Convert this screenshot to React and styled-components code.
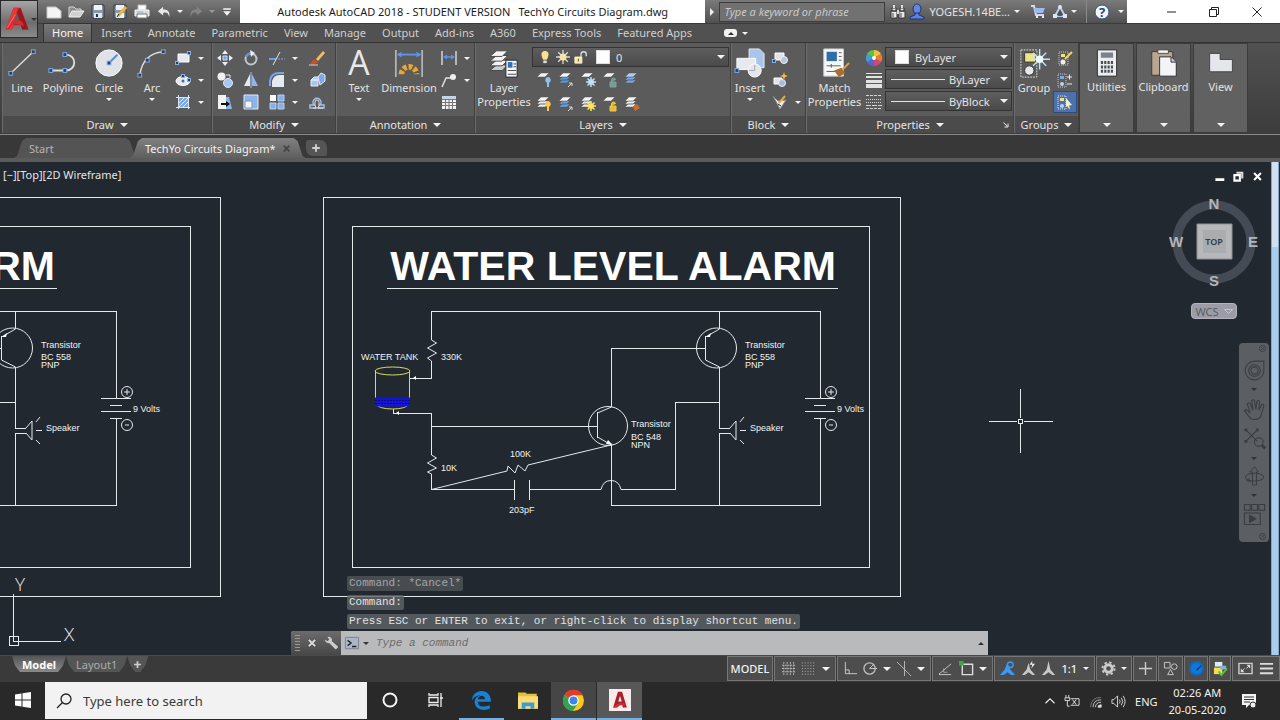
import React from 'react';
import styled, { createGlobalStyle } from 'styled-components';

const INK = '#23344d';

const glyphs = {
    logo: [32, <>
        <path d="M3 28 12 3h8l9 25h-7l-1.500-5H12l-1.500 5z" fill="#c3202b" />
        <path d="M3 28 12 3h5L10.500 28z" fill="#e03a3f" />
        <path d="M20 3l9 25h-7L16 8z" fill="#9c1620" />
        <path d="M16 9l-3.500 9.500h6.800z" fill="#5d5d5d" />
        <path d="M8 20c4-4 9-3 14-1l2 5c-5-2-9-3-13-2l-5 6H3z" fill="#d42c33" />
        <path d="M5 26l9-15" stroke="#f4797a" />
    </>],
    fresh: [16, <path d="M1 3h9l5 4v7H1z" fill="#f4f4f4" stroke="#c4c4c4" />],
    folder: [16, <>
        <path d="M1 13V3h5l2 2h5v2" fill="#8c8c8c" stroke="#d5d5d5" />
        <path d="M1 13 4 7h12l-4 6z" fill="#d0d0d0" stroke="#f0f0f0" />
    </>],
    save: [16, <>
        <path d="M2 1h12v13H2z" fill="#8b97a5" stroke="#303a47" />
        <path d="M4 1h8v5H4z" fill="#eef2f6" /><path d="M4 9h8v5H4z" fill="#dfe5ea" /><path d="M6 10h2v3H6z" fill={INK} />
    </>],
    saveAs: [16, <>
        <path d="M2 1h12v13H2z" fill="#8b97a5" stroke="#303a47" />
        <path d="M4 1h8v5H4zM4 9h8v5H4z" fill="#eef2f6" />
        <path d="M6 12 14 3" stroke="#e9b83d" strokeWidth="3" /><path d="M5 13l2-3" stroke="#222" />
    </>],
    print: [16, <>
        <path d="M4 1h8v5H4z" fill="#fff" stroke="#bbb" /><path d="M1 6h14v6H1z" fill="#dcdcdc" stroke="#f5f5f5" />
        <path d="M3 10h10v4H3z" fill="#fff" stroke="#777" /><path d="M3 8h6" stroke="#8bb0d8" />
    </>],
    undo: [16, <path d="M7 2 1 7l6 5V9c4-1 6 0 7 5 1-6-1-9-7-9z" fill="#e8e8e8" />],
    redo: [16, <path d="M9 2l6 5-6 5V9c-4-1-6 0-7 5C1 8 3 5 9 5z" fill="#858585" />],
    customize: [16, <path d="M3 3h10v2H3zM3 7h10l-5 6z" fill="#f5f5f5" />],
    binoculars: [16, <>
        <path d="M2 4h4v3H2zM10 4h4v3h-4zM1 7h6v7H1zM9 7h6v7H9z" fill="#e9e9e9" stroke="#333" />
        <path d="M7 6h2v4H7zM3 1h2v3H3zM11 1h2v3h-2z" fill="#ddd" /><path d="M3 9v4M11 9v4" stroke="#444" />
    </>],
    user: [16, <>
        <ellipse cx="8" cy="5" rx="4" ry="5" fill="#6287e0" stroke="#1b3372" />
        <path d="M6 9v2l-5 2v2h14v-2l-5-2V9z" fill="#5d83de" stroke="#1b3372" />
    </>],
    cart: [16, <>
        <path d="M1 2h3l2 9h8" fill="none" stroke="#cfdcf6" strokeWidth="2" />
        <path d="M4 4h11l-2 5H5z" fill="#9fb9e8" /><path d="M6 13h2M12 13h2" stroke="#dfe8fa" strokeWidth="2" />
    </>],
    a360: [16, <>
        <path d="M8 3 3 12h10z" fill="#4e4e4e" stroke="#b9cbee" strokeWidth="2" />
        <circle cx="8" cy="3" r="2" fill="#d9e4fa" /><path d="M1 10h4v4H1zM11 10h4v4h-4z" fill="#dce6f9" />
        <path d="M5 12q3-3 6 0" fill="#3c5892" />
    </>],
    help: [16, <>
        <circle cx="8" cy="8" r="7" fill="#f2f5fa" stroke="#34507c" />
        <text x="8" y="13" textAnchor="middle" fontSize="13" fontWeight="700" fill="#24477f">?</text>
    </>],
    minimize: [16, <path d="M4 8h9" stroke="#222" />],
    restore: [16, <><path d="M3.500 5.500h7v7h-7zM5.500 5V3.500h7v7H11" fill="none" stroke="#222" /></>],
    close: [16, <path d="m3.500 3.500 9 9m0-9-9 9" stroke="#222" />],

    line: [32, <><path d="M4 27 28 4" stroke="#dcdcdc" strokeWidth="1.500" /><Nodes at={[[4, 27], [28, 4]]} /></>],
    polyline: [32, <><path d="M3 24h16c12 0 12-17 0-17" fill="none" stroke="#dcdcdc" strokeWidth="2" /><Nodes at={[[3, 24], [18, 24], [18, 7]]} /></>],
    circle: [32, <><circle cx="16" cy="16" r="14" fill="#dfe3e8" stroke="#fff" /><path d="M16 16 25 7" stroke="#4f88d8" strokeWidth="2" /><Nodes at={[[16, 16]]} /></>],
    arc: [32, <><path d="M3 29Q6 6 28 4" fill="none" stroke="#dcdcdc" strokeWidth="1.500" /><Nodes at={[[3, 29], [11, 13], [28, 4]]} /></>],
    rect: [16, <><path d="M3 4h11v8H3z" fill="#e5e8ee" stroke="#fff" /><Nodes small at={[[2, 13], [14, 3]]} /></>],
    ellipse: [16, <><ellipse cx="8" cy="9" rx="7" ry="4.500" fill="#e5e8ee" stroke="#fff" /><circle cx="8" cy="9" r="1.500" fill="#3d6bb0" /><Nodes small at={[[8, 4], [14, 8]]} /></>],
    hatch: [16, <>
        <path d="M3.500 1v14M13.500 1v14M1 3.500h14M1 13.500h14" stroke="#dbe5f2" />
        <path d="M4 4h9v9H4z" fill="#7fa8e2" /><path d="m4 9 5-5M4 13l9-9M8 13l5-5" stroke="#dfe9f8" />
    </>],
    move: [16, <>
        <path d="M8 0l3 4H5zM8 16l3-4H5zM0 8l4-3v6zM16 8l-4-3v6z" fill="#eaf0f8" />
        <path d="M6 6h4v4H6z" fill="#6d9fe4" stroke="#cfe0f6" />
    </>],
    rotate: [16, <>
        <circle cx="8" cy="9" r="5.500" fill="none" stroke="#c2c7cd" strokeWidth="2" /><path d="M3 7a5.500 5.500 0 0 1 8-3" fill="none" stroke="#5b95ea" strokeWidth="2" /><path d="m7 0 5 3-4 4z" fill="#e8eef7" />
    </>],
    trim: [16, <><path d="M0 9h7" stroke="#69a0ec" strokeWidth="2" /><path d="M9 9h7" stroke="#79a9ed" strokeDasharray="2 1" /><path d="M11 2 4 15" stroke="#e5e5e5" /></>],
    erase: [16, <>
        <path d="M7 9 14 1l2 2-7 8z" fill="#f3c15a" /><path d="m5 9 4 3-4 3-4-1z" fill="#d94b24" /><path d="M0 15h9" stroke="#cfd3d8" />
    </>],
    copy: [16, <>
        <circle cx="4.500" cy="4.500" r="4" fill="#f0f0f0" /><circle cx="11" cy="11" r="4.500" fill="#a9c6f0" stroke="#dbe7f9" />
        <path d="M9 3h4v3" fill="none" stroke="#e6e6e6" />
    </>],
    mirror: [16, <><path d="M7 2v12H1z" fill="#e8e8e8" /><path d="M9 2v12h6z" fill="#8fb5ea" /><path d="M8 0v16" stroke="#a7c3ec" /></>],
    fillet: [16, <><path d="M3 15V9q2-6 7-6h5v12z" fill="#e6e9ed" /><path d="M1 14V9q1-8 9-8h5" fill="none" stroke="#77a6ea" strokeWidth="2" /></>],
    explode: [16, <>
        <path d="m2 8 3-3h6l-2 3zM2 8h7v6H2z" fill="#a8c7ef" stroke="#e5eefb" /><path d="m9 5 3-4 4 2v6l-5 4z" fill="#7fa9e4" stroke="#e5eefb" />
    </>],
    stretch: [16, <><path d="M1 1h8v14H1z" fill="#f2f2f2" /><path d="M9 3h3l3 12H9z" fill="#8fb5e8" /><path d="M4 10h6" stroke="#111" strokeWidth="2" /><path d="m9 7 4 3-4 3z" fill="#111" /></>],
    scale: [16, <><path d="M1 1h14v14H1z" fill="#8fb5e8" stroke="#e2ebf8" /><path d="M2 7h7v7H2z" fill="#f4f4f4" stroke="#7a94bb" /></>],
    array: [16, <><path d="M1 1h6v6H1z" fill="#fafafa" /><path d="M9 1h6v6H9zM1 9h6v6H1zM9 9h6v6H9z" fill="#86b0ea" stroke="#b7d0f4" /></>],
    offset: [16, <>
        <path d="M1 14v-3h4a4 4 0 1 1 6 0h4v3z" fill="none" stroke="#a3c1ec" strokeWidth="1.500" /><path d="M4 14h3a2 2 0 0 0-1-2V8a2 2 0 0 1 4 0v4l-1 2h5" fill="none" stroke="#e5e5e5" />
    </>],
    text: [32, <text x="16" y="29" textAnchor="middle" fontSize="36" fontWeight="400" fill="#e8e8e8" fontFamily="Open Sans">A</text>],
    dimension: [32, <>
        <path d="M2 2v29M30 2v29" stroke="#c8c8c8" strokeWidth="1.500" /><path d="M4 7h24" stroke="#5d94ea" strokeWidth="2" /><path d="m3 7 5-3v6zM29 7l-5-3v6z" fill="#5d94ea" />
        <path d="M8 28a8 8 0 0 1 16 0" fill="none" stroke="#eda62c" strokeWidth="6" strokeDasharray="4 2" />
    </>],
    linear: [16, <><path d="M1 1v14M15 1v14" stroke="#d5d5d5" strokeWidth="1.500" /><path d="M3 7h10" stroke="#5d94ea" strokeWidth="1.500" /><path d="m2 7 4-2.500v5zM14 7l-4-2.500v5z" fill="#5d94ea" /></>],
    leader: [16, <><path d="M1 15 5 6h5" fill="none" stroke="#e0e0e0" strokeWidth="1.500" /><circle cx="12" cy="5" r="3" fill="#eee" /></>],
    table: [16, <><path d="M1 2h14v13H1z" fill="#f1f1f1" /><path d="M1 2h14v3H1z" fill="#c3d3e9" /><path d="M1 5.500h14M1 8.500h14M1 11.500h14M4.500 5v10M8 5v10M11.500 5v10" stroke="#777" /></>],
    layerProps: [32, <>
        <Sheets /><path d="M18 13h12v18H18z" fill="#f5f7fa" stroke="#222" /><path d="M20 15h5v6h-5z" fill="#3271b8" /><path d="M26 17h3M26 20h3M20 24h9M20 28h9" stroke="#444" />
    </>],
    bulb: [16, <><path d="M4 5a4 4 0 0 1 8 0q0 3-2 6H6Q4 8 4 5z" fill="#f9e28b" /><path d="M6 12h4v3H6z" fill="#ddd" /></>],
    sun: [16, <><path d="M8 0v16M0 8h16M2.500 2.500l11 11m0-11-11 11" stroke="#d9d9d9" strokeWidth="1.500" /><circle cx="8" cy="8" r="4" fill="#f7e6a0" /></>],
    unlock: [16, <><path d="M1 8h8v7H1z" fill="#f6e6a2" stroke="#fff8d4" /><path d="M8 8V5a3 3 0 0 1 6 0v2" fill="none" stroke="#ddd" strokeWidth="1.500" /><path d="M5 10v3" stroke="#444" /></>],
    insert: [32, <>
        <path d="M15 1h11l5 5v15H15z" fill="#a9c6ea" stroke="#e5eefa" /><path d="M2 11h20v12H2z" fill="#e7e9ee" stroke="#fff" /><circle cx="21" cy="24" r="7" fill="#e3e6ea" stroke="#fff" /><path d="M21 24v-6M21 24h-6" stroke="#a0a7b3" /><Nodes at={[[2, 24]]} />
    </>],
    block: [16, <><path d="M3 3h9v7H3z" fill="#dfe3ea" stroke="#fff" /><circle cx="12" cy="10" r="3.500" fill="#b9c5d8" stroke="#eef2f8" /><Nodes small at={[[2, 11]]} /></>],
    blockNew: [16, <><path d="M2 6h8v6H2z" fill="#dfe3ea" stroke="#fff" /><circle cx="10" cy="11" r="3.500" fill="#a8bddb" stroke="#e8eef8" /><path d="m12 0 1 3 3 1-3 1-1 3-1-3-3-1 3-1z" fill="#ffb93b" /></>],
    attr: [16, <><path d="M1 2l5 5 8-1-6 9z" fill="#f1f1f1" stroke="#888" /><path d="M7 9 13 2" stroke="#e8a93a" strokeWidth="2" /><path d="m6 10 3 2" stroke="#222" /></>],
    match: [32, <>
        <path d="M4 1h21v29H4z" fill="#f7f8fa" stroke="#ccc" /><path d="M7 4h11v10H7z" fill="#2f6fa8" /><path d="M20 5h3M20 9h3M20 13h3M7 19h15M7 25h10M12 17v4" stroke="#555" />
        <path d="m15 24 8-3 4 6-7 4z" fill="#a8702b" /><path d="m24 23 7-7" stroke="#d3a259" strokeWidth="2" />
    </>],
    wheel: [16, <>
        <path d="M8 8V0a8 8 0 0 1 7 4z" fill="#f3c23a" /><path d="M8 8l7-4a8 8 0 0 1 0 8z" fill="#ee7a36" /><path d="M8 8l7 4a8 8 0 0 1-7 4z" fill="#c94a7c" />
        <path d="M8 8v8a8 8 0 0 1-7-4z" fill="#5b63d3" /><path d="M8 8l-7 4a8 8 0 0 1 0-8z" fill="#3f9fd6" /><path d="M8 8 1 4a8 8 0 0 1 7-4z" fill="#5bbf57" /><circle cx="8" cy="8" r="2" fill="#fff" />
    </>],
    weights: [16, <path d="M0 1h16v1H0zM0 4h16v2H0zM0 8h16v3H0zM0 12h16v4H0z" fill="#e2e2e2" />],
    types: [16, <><path d="M0 1.500h16M0 14.500h16" stroke="#d5d5d5" strokeDasharray="3 1" /><path d="M0 5.500h16M0 8.500h16" stroke="#d5d5d5" strokeDasharray="1 1" /><path d="M0 11.500h16" stroke="#d5d5d5" strokeDasharray="5 1" /></>],
    group: [32, <>
        <path d="M2 2h17v29H2z" fill="none" stroke="#ddd" strokeDasharray="2 1" /><path d="M6 5h12v10H6z" fill="#f0e583" stroke="#333" /><circle cx="11" cy="24" r="5" fill="#e8e8e8" stroke="#333" />
        <path d="M22 1v22M11 12h22M15 5l14 14m0-14L15 19" stroke="#bde3fb" strokeWidth="1.500" /><circle cx="22" cy="12" r="4" fill="#eefaff" />
    </>],
    ungroup: [16, <><path d="M2 2h9v13H2z" fill="none" stroke="#ccc" strokeDasharray="1 1" /><path d="M4 4h4v3H4z" fill="#f0e583" /><circle cx="6" cy="12" r="2.500" fill="#eee" /><path d="m8 9 7-7" stroke="#f0d76c" strokeWidth="2" /></>],
    groupEdit: [16, <><path d="M1 2h8v13H1z" fill="none" stroke="#ccc" strokeDasharray="1 1" /><path d="M3 4h4v3H3z" fill="#7ea9e3" /><circle cx="5" cy="12" r="2" fill="#bcd3f0" /><path d="M10 5h5M12.500 2.500v5M10 12h5" stroke="#eee" /></>],
    groupPick: [16, <><path d="M1 2h8v13H1z" fill="none" stroke="#e8e8e8" strokeDasharray="1 1" /><path d="M3 4h4v3H3z" fill="#f0e583" /><circle cx="5" cy="12" r="2" fill="#bcd3f0" /><path d="m9 4 6 7-3 .5 1 3-1 .5-1.500-3L9 13z" fill="#f8f3c2" /></>],
    calc: [32, <>
        <path d="M5 1h22v30H5z" fill="#eceef0" stroke="#222" /><path d="M9 4h14v6H9z" fill="#7b828b" /><path d="M9 15.500h14M9 20.500h14M9 25.500h14" stroke="#4a4f57" strokeWidth="3.500" strokeDasharray="2.500 1.300" />
    </>],
    clipboard: [32, <>
        <path d="M2 3h24v27H2z" fill="#b9a692" stroke="#3c3128" /><path d="M9 1h12v4H9z" fill="#f5f5f5" stroke="#444" /><path d="M11 9h13l6 6v16H11z" fill="#f4f4f8" stroke="#222" /><path d="M24 9v6h6" fill="#ccd" stroke="#222" />
    </>],
    view: [32, <path d="M3 5h12v7h14v14H3z" fill="#e4e6ec" stroke="#3c3c3c" />],

    windows: [16, <path d="M0 2.500 6.500 1.500v6H0zM7.500 1.300 16 0v7.500H7.500zM0 8.500h6.500v6L0 13.500zM7.500 8.500H16V16l-8.500-1.300z" fill="#fff" />],
    search: [16, <><circle cx="10" cy="6" r="5" fill="none" stroke="#222" strokeWidth="1.300" /><path d="M6.500 9.500 1 15" stroke="#222" strokeWidth="1.300" /></>],
    cortana: [16, <circle cx="8" cy="8" r="6.500" fill="none" stroke="#f5f5f5" strokeWidth="2" />],
    taskView: [16, <path d="M1 1v2h9V1M1 5.500h9v5H1zM1 15v-2h9v2M13 1v14M12 6h3" fill="none" stroke="#eee" strokeWidth="1.300" />],
    edge: [16, <path d="M0 8C0 3 4 0 8 0c5 0 8 4 8 9H5c0 3 2 4 5 4 2 0 3.500-.5 5-1v3c-5 2-11 1-12.500-4C1.500 7 4 4.500 7 3.500 4 3.500 1 5.500 0 8zm5-1h6c0-4-5.500-4-6 0z" fill="#1583d8" />],
    explorer: [16, <><path d="M0 2h6l1 1h8v12H0z" fill="#eebd38" /><path d="M0 5h16v10H0z" fill="#fbdd78" /><path d="M3 15v-5h10v5h-3v-2H6v2z" fill="#3c9bd9" /></>],
    chrome: [16, <>
        <circle cx="8" cy="8" r="8" fill="#fbc916" /><path d="M8 8 1 4a8 8 0 0 1 14 0H8z" fill="#e33b2e" /><path d="M8 8 1 4a8 8 0 0 0 6.500 12L11.500 10z" fill="#31a350" /><circle cx="8" cy="8" r="4" fill="#fff" /><circle cx="8" cy="8" r="3" fill="#3f83ee" />
    </>],
    acad: [32, <><path d="M0 0h32v32H0z" fill="#fbeceb" /><path d="M6 27 13 4h6l7 23h-6l-1-5h-7l-1 5z" fill="#a8202a" /><path d="m16 10-2.500 8h5z" fill="#fbeceb" /><path d="M6 27q7-9 18-6l1 3q-9-2-13 3z" fill="#cd2f36" /></>],
    up: [16, <path d="m2 11 6-6 6 6" fill="none" stroke="#eee" strokeWidth="1.500" />],
    battery: [16, <><path d="M1 1v3M4 1v3M0 4h5v3H0zM2.500 7v6H5M6 5h9v7H6" fill="none" stroke="#ddd" /><path d="m8 6 4 5m0-5-4 5" stroke="#eee" /></>],
    wifi: [16, <g fill="none" stroke="#ddd"><path d="M2 15Q2 3 15 3" stroke="#888" /><path d="M5 15q0-9 10-9M8 15q0-6 7-6" /><path d="M11 15q0-3 4-3v3z" fill="#ddd" /></g>],
    volume: [16, <path d="M1 6h2l4-4v12l-4-4H1zM9 6q1.500 2 0 4M11 4q3 4 0 8M13 2q4 6 0 12" fill="none" stroke="#ddd" />],
    note: [16, <><path d="M1 1h14v11h-7l-3 3v-3H1z" fill="#f3f3f3" /><path d="M3 4h10M3 6.500h10M3 9h6" stroke="#333" /><circle cx="12" cy="12" r="3" fill="#eee" stroke="#333" /></>],

    gridOn: [16, <path d="M3 1v14M6.500 1v14M10 1v14M13.500 1v14M1 4.500h14M1 8h14M1 11.500h14" stroke="#bbb" strokeDasharray="2 1" />],
    snap: [16, <path d="M1 2h14M1 5h14M1 8h14M1 11h14M1 14h14" stroke="#bbb" strokeDasharray="1 2" />],
    ortho: [16, <path d="M2.500 1v12.500H15M2.500 9.500h4v4" fill="none" stroke="#ccc" />],
    polar: [16, <><circle cx="7" cy="8" r="6" fill="none" stroke="#bbb" strokeWidth="1.500" /><path d="M7 8h8M7 8l4-4" stroke="#ccc" /></>],
    iso: [16, <path d="m0 1 15 15M8 0v16" stroke="#bbb" />],
    otrack: [16, <><path d="M1 14 14 3M1 14.500h13" stroke="#ccc" /><path d="M6 8v4h4" fill="none" stroke="#aaa" /></>],
    osnap: [16, <><path d="M3.500 3.500h11v11h-11z" fill="none" stroke="#ddd" strokeWidth="1.500" /><path d="M0 0h5v5H0z" fill="#2eb134" /></>],
    scaleOn: [16, <><path d="M8 1 5 9l-5 6h4l4-3 4 3h4l-5-6z" fill="#3a9af5" /><circle cx="11" cy="4" r="3" fill="#505050" stroke="#3a9af5" strokeWidth="1.500" /></>],
    scaleAuto: [16, <><path d="M8 2 6 9l-5 6h3l4-3 4 3h3l-5-6z" fill="#c8c8c8" /><path d="m12 0-3 4h3l-1 4 4-5h-3z" fill="#eee" /></>],
    scaleList: [16, <path d="M8 0 6 9l-5 6h3l4-3 4 3h3l-5-6z" fill="#c8c8c8" />],
    gear: [16, <><circle cx="8" cy="8" r="4" fill="none" stroke="#ccc" strokeWidth="3" /><circle cx="8" cy="8" r="6.500" fill="none" stroke="#ccc" strokeWidth="2" strokeDasharray="2.500 2.600" /></>],
    plus: [16, <path d="M8 1v14M1 8h14" stroke="#ccc" strokeWidth="1.500" />],
    shapes: [16, <><path d="M1.500 1.500h6v6h-6zM8 9l3 5.500H5z" fill="none" stroke="#ccc" /><circle cx="12" cy="6" r="3" fill="none" stroke="#ccc" /></>],
    perf: [16, <><circle cx="8" cy="8" r="8" fill="#0f67c0" /><circle cx="8" cy="8" r="6" fill="#1377d8" /><path d="M8 10l5-5" stroke="#083c74" strokeWidth="1.500" /></>],
    standards: [16, <><path d="M2 1h8v5H2z" fill="#dce9f6" /><path d="M1 7h9v7H1z" fill="#f5df4a" /><path d="M8 5h6v4H8z" fill="#7fb2ea" /><path d="m6 11 3 4 6-7" fill="none" stroke="#5fbf3a" strokeWidth="2" /></>],
    full: [16, <><path d="M1 2.500h14v11H1z" fill="none" stroke="#ccc" strokeWidth="1.500" /><path d="M9 4h4v4zM7 12H3V8z" fill="#ddd" /><path d="m9 8 3-3M7 8l-3 3" stroke="#ddd" /></>],
    menu: [16, <path d="M1 3h14M1 8h14M1 13h14" stroke="#ddd" strokeWidth="2" />],
    wrench: [16, <path d="M1 4a4 4 0 0 0 5 4l6 6q1 2 3 0t0-3L9 6a4 4 0 0 0-5-5l2 3-2 2z" fill="#ccc" />],
    prompt: [16, <><path d="M.5 1.500h15v13H.5z" fill="#aab6c6" stroke="#747d8a" /><path d="m3 5 4 3-4 3" fill="none" stroke="#222" strokeWidth="1.500" /><path d="M8 12h5" stroke="#222" strokeWidth="1.500" /></>],
    cross: [16, <path d="m3 3 10 10M13 3 3 13" stroke="currentColor" strokeWidth="3" />],
    plusBold: [16, <path d="M8 2v12M2 8h12" stroke="#d0d0d0" strokeWidth="3" />],
    docMin: [16, <path d="M2 12.500h13" stroke="#fff" strokeWidth="4" />],
    docRestore: [16, <><path d="M5 1h10v10h-3V4H5z" fill="#ddd" /><path d="M2 6h8v8H2z" fill="none" stroke="#fff" strokeWidth="3" /></>],
    launcher: [16, <path d="M3 3l7 7M12 5v7H5" fill="none" stroke="#eee" strokeWidth="2" />],
    wheelNav: [32, <g fill="none" stroke="#3a3e43" strokeWidth="1.500"><path d="M16 3h13v13a13 13 0 1 1-13-13z" /><circle cx="16" cy="16" r="8" /><circle cx="16" cy="16" r="5" /></g>],
    hand: [32, <path d="M11 29 2 18q2-3 5 0l3 3L6 8q2-3 4 0l4 9-2-13q2-3 4 0l2 12 1-11q3-3 4 0l-1 12 4-8q3-1 3 2l-5 16q-2 3-9 3z" fill="none" stroke="#393d42" strokeWidth="1.500" />],
    zoomNav: [32, <g fill="none" stroke="#393d42" strokeWidth="1.500"><path d="M4 4l16 16M20 4 4 20" /><path d="M2 2h4v4H2zM18 2h4v4h-4zM2 18h4v4H2z" fill="#393d42" stroke="none" /><circle cx="22" cy="21" r="6" /><path d="m26 25 5 5" strokeWidth="4" /></g>],
    orbit: [32, <g fill="none" stroke="#393d42" strokeWidth="1.500"><path d="M13 29V9H9l7-8 6 8h-3v20z" /><ellipse cx="16" cy="17" rx="14" ry="6" /><path d="m10 24-6-2 5-3" /></g>],
    motion: [32, <g fill="none" stroke="#393d42" strokeWidth="1.500"><path d="M2 2h8v8H2zM12 2h8v8h-8zM22 2h8v8h-8zM2 14h22v16H2z" /><path d="m9 17 9 5-9 5z" fill="#393d42" /></g>],
    dismiss: [16, <><circle cx="8" cy="8" r="7" fill="none" stroke="#393d42" strokeWidth="2" /><path d="m5 5 6 6m0-6-6 6" stroke="#393d42" strokeWidth="2" /></>],
};

const layerTints = [
    ['#8ec2ee', '#5b97da', '#bfe1fa', '#7aa39c', '#78a8e4'],
    ['#ffc94d', '#6b9fe4', '#ffe564', '#f4c83a', '#c76e2c'],
];

const ribbonTabs = ['Home', 'Insert', 'Annotate', 'Parametric', 'View', 'Manage', 'Output', 'Add-ins', 'A360', 'Express Tools', 'Featured Apps'];

const circuitLabels = [
    [361, 360, 'WATER TANK'],
    [441, 360, '330K'],
    [441, 471, '10K'],
    [510, 457, '100K'],
    [509, 513, '203pF'],
    [631, 427, 'Transistor'],
    [631, 440, 'BC 548'],
    [631, 448, 'NPN'],
    [745, 348, 'Transistor'],
    [745, 360, 'BC 558'],
    [745, 368, 'PNP'],
    [750, 431, 'Speaker'],
    [837, 412, '9 Volts'],
];

function Icon({ name, size = 16 }) {
    const [box, art] = glyphs[name];
    return <svg width={size} height={size} viewBox={`0 0 ${box} ${box}`} aria-hidden="true" overflow="visible">{art}</svg>;
}

function Nodes({ at, small }) {
    const r = small ? 1.5 : 2;
    return at.map(([x, y]) => (
        <rect key={`${x}-${y}`} x={x - r} y={y - r} width={r * 2} height={r * 2} fill="#30405c" stroke="#7fb0f2" />
    ));
}

function Sheets() {
    return [20, 15, 10, 5].map((y) => (
        <path key={y} d={`M1 ${y + 4}l7-6h12l-6 6z`} fill={y === 20 ? '#c9ccd1' : '#f4f4f4'} stroke="#444" />
    ));
}

function LayerTool({ row, col }) {
    const tint = layerTints[row][col];
    const stack = row === 1 && col !== 3 || col === 1 || col === 4;
    return (
        <svg width="16" height="16" viewBox="0 0 16 16" aria-hidden="true">
            {stack && <path d="M1 11l3-3h8l-3 3zM1 8l3-3h8L9 8z" fill={col === 1 || (row === 0 && col === 4) ? tint : '#eee'} stroke="#555" strokeWidth=".5" />}
            <path d="M1 5l4-4h8L9 5z" fill={row === 0 && col === 4 ? '#a9cdf3' : '#f4f4f4'} stroke="#555" strokeWidth=".5" />
            {col === 0 && <path d="M12 5a3 3 0 0 1 2 5l-1 1v4h-2v-4l-1-1a3 3 0 0 1 2-5z" fill={tint} />}
            {col === 1 && <path d="m10 15 4-4m0 3v-3h-3" stroke="#ddd" fill="none" />}
            {col === 2 && <g stroke={tint} strokeWidth="1.500"><path d="M11 5v10M6 10h10M7.500 6.500l7 7m0-7-7 7" /><circle cx="11" cy="10" r="2" fill={tint} /></g>}
            {col === 3 && <path d="M8 10h6v5H8zM9.500 10V8a2 2 0 0 1 4 0" fill={tint} stroke={tint} fillOpacity=".9" />}
            {col === 4 && row === 1 && <path d="m9 11 4-3 3 4-5 3z" fill={tint} />}
        </svg>
    );
}

function BigTool({ icon, label, caret, width, size = 30 }) {
    return (
        <Big $width={width}>
            <Icon name={icon} size={size} />
            <span>{label}</span>
            {caret && <Caret $small />}
        </Big>
    );
}

function SmallTools({ rows, gap }) {
    return (
        <SmallGrid>
            {rows.map((row, i) => (
                <SmallRow key={i} $gap={gap}>
                    {row.map(([icon, caret, active]) => (
                        <Split key={icon}>
                            <IconButton aria-label={icon} $active={active}><Icon name={icon} /></IconButton>
                            {caret ? <CaretButton aria-label={`${icon} options`}><Caret $small /></CaretButton> : null}
                        </Split>
                    ))}
                </SmallRow>
            ))}
        </SmallGrid>
    );
}

function Panel({ title, width, launcher, children }) {
    return (
        <PanelBox $width={width}>
            <PanelBody>{children}</PanelBody>
            <PanelTitle>
                {title}<Caret />
                {launcher && <Launcher aria-label="Properties palette"><Icon name="launcher" size={8} /></Launcher>}
            </PanelTitle>
        </PanelBox>
    );
}

function Combo({ label, value, line, swatch, children }) {
    return (
        <ComboBox>
            {children}
            {swatch && <Swatch />}
            {line && <LineSample />}
            <select aria-label={label} defaultValue={value}><option>{value}</option></select>
            <Caret />
        </ComboBox>
    );
}

function Header() {
    return (
        <HeaderBar>
            <AppButton aria-label="Application menu"><Icon name="logo" size={28} /><Caret $small $dark /></AppButton>
            <HeaderRows>
                <TitleBar>
                    <QuickAccess>
                        {['fresh', 'folder', 'save', 'saveAs', 'print'].map((n) => <QuickButton key={n} aria-label={n}><Icon name={n} /></QuickButton>)}
                        <QuickButton aria-label="Undo"><Icon name="undo" size={14} /></QuickButton><Caret $small />
                        <QuickButton aria-label="Redo"><Icon name="redo" size={14} /></QuickButton><Caret $small $dim />
                        <QuickButton aria-label="Customize" $tight><Icon name="customize" size={12} /></QuickButton>
                    </QuickAccess>
                    <DocTitle><span>Autodesk AutoCAD 2018 - STUDENT VERSION</span><span>TechYo Circuits Diagram.dwg</span></DocTitle>
                    <InfoCenter>
                        <Expand aria-label="Collapse search" />
                        <KeywordInput aria-label="Help search" placeholder="Type a keyword or phrase" />
                        <QuickButton aria-label="Search"><Icon name="binoculars" /></QuickButton>
                        <UserButton><Icon name="user" />YOGESH.14BE...<Caret $small /></UserButton>
                        <QuickButton aria-label="Store"><Icon name="cart" /></QuickButton>
                        <QuickButton aria-label="A360"><Icon name="a360" /></QuickButton><Caret $small />
                        <HelpButton aria-label="Help"><Icon name="help" /><Caret $small /></HelpButton>
                    </InfoCenter>
                    <WindowButtons>
                        {['minimize', 'restore', 'close'].map((n) => <button key={n} aria-label={n}><Icon name={n} /></button>)}
                    </WindowButtons>
                </TitleBar>
                <RibbonTabs>
                    {ribbonTabs.map((tab, i) => <RibbonTab key={tab} $active={i === 0}>{tab}</RibbonTab>)}
                    <Pill aria-label="Minimize ribbon"><i /></Pill><Caret $small />
                </RibbonTabs>
            </HeaderRows>
        </HeaderBar>
    );
}

function Ribbon() {
    return (
        <RibbonBar>
            <Panel title="Draw" width={210}>
                <BigTool icon="line" label="Line" width={38} />
                <BigTool icon="polyline" label="Polyline" width={44} />
                <BigTool icon="circle" label="Circle" width={48} caret />
                <BigTool icon="arc" label="Arc" width={38} caret />
                <SmallTools rows={[[['rect', 1]], [['ellipse', 1]], [['hatch', 1]]]} />
            </Panel>
            <Panel title="Modify" width={124}>
                <SmallTools
                    gap={4}
                    rows={[
                        [['move'], ['rotate'], ['trim', 1], ['erase']],
                        [['copy'], ['mirror'], ['fillet', 1], ['explode']],
                        [['stretch'], ['scale'], ['array', 1], ['offset']],
                    ]}
                />
            </Panel>
            <Panel title="Annotation" width={139}>
                <BigTool icon="text" label="Text" width={44} caret />
                <BigTool icon="dimension" label="Dimension" width={56} />
                <SmallTools rows={[[['linear', 1]], [['leader', 1]], [['table']]]} />
            </Panel>
            <Panel title="Layers" width={256}>
                <BigTool icon="layerProps" label={<>Layer<br />Properties</>} width={56} />
                <Fields>
                    <Combo label="Layer" value="0">
                        <Icon name="bulb" size={14} /><Icon name="sun" size={14} /><Icon name="unlock" size={14} />
                        <Swatch />
                    </Combo>
                    {[0, 1].map((row) => (
                        <SmallRow key={row}>
                            {[0, 1, 2, 3, 4].map((col) => (
                                <IconButton key={col} aria-label={`Layer tool ${row * 5 + col + 1}`}><LayerTool row={row} col={col} /></IconButton>
                            ))}
                        </SmallRow>
                    ))}
                </Fields>
            </Panel>
            <Panel title="Block" width={75}>
                <BigTool icon="insert" label="Insert" width={36} caret />
                <SmallTools rows={[[['block']], [['blockNew']], [['attr', 1]]]} />
            </Panel>
            <Panel title="Properties" width={208} launcher>
                <BigTool icon="match" label={<>Match<br />Properties</>} width={55} />
                <SmallTools rows={[[['wheel']], [['weights']], [['types']]]} />
                <Fields>
                    <Combo label="Object colour" value="ByLayer" swatch />
                    <Combo label="Lineweight" value="ByLayer" line />
                    <Combo label="Linetype" value="ByBlock" line />
                </Fields>
            </Panel>
            <Panel title="Groups" width={65}>
                <BigTool icon="group" label="Group" width={38} />
                <SmallTools rows={[[['ungroup']], [['groupEdit']], [['groupPick', 0, true]]]} />
            </Panel>
            {[['calc', 'Utilities'], ['clipboard', 'Clipboard'], ['view', 'View']].map(([icon, label]) => (
                <Collapsed key={label}><Icon name={icon} size={28} /><span>{label}</span><Caret /></Collapsed>
            ))}
        </RibbonBar>
    );
}

function Circuit({ shift = 0 }) {
    return (
        <g transform={`translate(${shift} 0)`}>
            <g shapeRendering="crispEdges">
                <path d="M431.500 340V311.500H820.500V398M431.500 361V378.500H410M393.500 409V413.500H431.500V455M431.500 426.500H597M431.500 474V489.500H514M529 489.500H601M621 489.500H675.500V402.500H719M611.500 407V348.500H705M611.500 445V505.500H820.500V419M719.500 311V329M719.500 367V428.500H730M719.500 505V433.500H730" />
                <path d="M514.500 480V500M529.500 480V500M597.500 412V438M705.500 336V360M805 398.500H835M814 405.500H826M805 411.500H835" />
                <path d="M814 418.500H826M740 430.500H746" />
            </g>
            <path d="M431.500 340l5 3-9 5 9 5-9 5 4 3M431.500 455l5 3-9 5 9 5-9 4 4 2M431.500 489.500 507 471l1-5 7 7 3-8 7 6 3-6 83-20M601 489.500q2-9 10-9t10 9" />
            <path d="M597.500 413 611.500 407M597.500 437 611.500 445M705.500 337 719.500 329M705.500 360 719.500 367M730 428l6-7v19l-6-7M740 422l4-5M740 440l4 4" />
            <path d="M606 444l2-4 5 5zM706 337l5-4-1 4zM413 378l3-2v4zM396 413l3-2v4z" fill="#fff" stroke="none" />
            <circle cx="608" cy="426" r="19.500" />
            <circle cx="716.500" cy="348" r="20" />
            <circle cx="831" cy="392" r="5.500" />
            <circle cx="831" cy="425" r="5.500" />
            <path d="M828 392h6M831 389v6M829 425h4" />
            <g stroke="#d8dc5a">
                <ellipse cx="392.500" cy="371" rx="17.500" ry="4" />
                <path d="M375.500 371v33q4 5 17 5t17-5v-33" />
            </g>
            <path d="M375 399h35M375 402h35M375 405h35" stroke="#1414d8" strokeWidth="3" />
            <path d="M375 400.500h35M375 403.500h35" stroke="#0b0b7c" strokeDasharray="2 1" />
            <g fill="#f2f2f2" stroke="none" fontSize="9">
                {circuitLabels.filter(([x]) => x + shift >= 0).map(([x, y, label]) => <text key={y + label} x={x} y={y}>{label}</text>)}
            </g>
        </g>
    );
}

function Heading({ end, children }) {
    return (
        <>
            <text x={end - 2} y="280" textAnchor="end" fontSize="41" fontWeight="700" fill="#fff" stroke="none">{children}</text>
            <path d={`M${end - 451} 288.500H${end}`} />
        </>
    );
}

function Drawing() {
    return (
        <Sheet width="1280" height="493" viewBox="0 162 1280 493" role="img" aria-label="Water level alarm circuit">
            <g fill="none" stroke="#e6e9ec">
                <g shapeRendering="crispEdges">
                    <path d="M323.500 197.500h577v399h-577zM352.500 226.500h517v341h-517zM-1 197.500h221v399H-1M-1 226.500h191v341H-1" />
                    <path d="M13.500 594v47.500H61M9.500 636.500h9v9h-9zM989 421.500h28M1024 421.500h29M1020.500 389v29M1020.500 424v29M1018.500 419.500h4v4h-4z" />
                </g>
                <Heading end={838}>WATER LEVEL ALARM</Heading>
                <Heading end={57}>RM</Heading>
                <Circuit />
                <Circuit shift={-704} />
            </g>
            <g fontFamily="Open Sans" fontSize="19" fontWeight="300" fill="#e6e9ec">
                <text x="15" y="591">Y</text>
                <text x="64" y="641">X</text>
            </g>
        </Sheet>
    );
}

function ViewCube() {
    return (
        <CubeBox>
            <Compass width="90" height="92" viewBox="1169 196 90 92" role="img" aria-label="View cube">
                <circle cx="1214" cy="242" r="37" fill="none" stroke="#454b54" strokeWidth="9" />
                <path d="M1197 224h35v35h-35z" fill="#b6b8b9" stroke="#8d9093" /><path d="M1203 230h23v23h-23z" fill="#a9adb0" />
                <text x="1214" y="245" fontSize="9" fontWeight="600" fill="#2e3a48">TOP</text>
                <g fontFamily="Liberation Sans" fontSize="15" fontWeight="700" fill="#b2b5ba">
                    <text x="1214" y="209">N</text><text x="1214" y="286">S</text>
                    <text x="1176" y="247">W</text><text x="1253" y="247">E</text>
                </g>
            </Compass>
            <Wcs>WCS<svg width="9" height="5" aria-hidden="true"><path d="M.5.500h8l-4 4z" fill="none" stroke="#c4c6ce" /></svg></Wcs>
        </CubeBox>
    );
}

function NavTools() {
    return (
        <NavBar>
            <NavCorner aria-label="Close navigation bar"><Icon name="dismiss" size={7} /></NavCorner>
            <Icon name="wheelNav" size={23} /><Caret $small $dark />
            <Icon name="hand" size={23} />
            <Icon name="zoomNav" size={23} /><Caret $small $dark />
            <Icon name="orbit" size={21} /><Caret $small $dark />
            <Icon name="motion" size={23} />
            <NavCorner aria-label="Navigation bar options"><Icon name="dismiss" size={7} /></NavCorner>
        </NavBar>
    );
}

function CommandLine() {
    return (
        <CommandArea>
            <History>
                <HistoryLine $faded>Command: *Cancel*</HistoryLine>
                <HistoryLine>Command:</HistoryLine>
                <HistoryLine>Press ESC or ENTER to exit, or right-click to display shortcut menu.</HistoryLine>
            </History>
            <CommandBar>
                <CommandTools>
                    <Grip />
                    <button aria-label="Close command line"><Icon name="cross" size={10} /></button>
                    <button aria-label="Customize command line"><Icon name="wrench" size={14} /></button>
                </CommandTools>
                <Icon name="prompt" size={14} /><Caret $small $dark />
                <CommandInput aria-label="Command" placeholder="Type a command" />
                <Caret $small $dark $up />
            </CommandBar>
        </CommandArea>
    );
}

function StatusBar() {
    return (
        <StatusRow>
            <LayoutTabs>
                <LayoutTab $active>Model</LayoutTab>
                <LayoutTab>Layout1</LayoutTab>
                <LayoutTab $add aria-label="New layout"><Icon name="plusBold" size={9} /></LayoutTab>
            </LayoutTabs>
            <StatusTools>
                <StatusGroup $width={46}><button>MODEL</button></StatusGroup>
                <StatusGroup $width={62}><Status name="gridOn" /><Status name="snap" /><Caret /></StatusGroup>
                <StatusGroup $width={94}><Status name="ortho" /><Status name="polar" /><Caret /><Status name="iso" /><Caret /></StatusGroup>
                <StatusGroup $width={61}><Status name="otrack" /><Status name="osnap" /><Caret /></StatusGroup>
                <StatusGroup $width={101}><Status name="scaleOn" /><Status name="scaleAuto" /><Status name="scaleList" /><button>1:1</button><Caret $small /></StatusGroup>
                <StatusGroup $width={36}><Status name="gear" /><Caret $small /></StatusGroup>
                <StatusGroup $width={24}><Status name="plus" /></StatusGroup>
                <StatusGroup $width={25}><Status name="shapes" /></StatusGroup>
                <StatusGroup $width={24}><Status name="perf" /></StatusGroup>
                <StatusGroup $width={22}><Status name="standards" /></StatusGroup>
                <StatusGroup $width={48}><Status name="full" /><Status name="menu" /></StatusGroup>
            </StatusTools>
        </StatusRow>
    );
}

function Status({ name }) {
    return <button aria-label={name}><Icon name={name} size={15} /></button>;
}

function Taskbar() {
    return (
        <TaskRow>
            <TaskButton aria-label="Start"><Icon name="windows" /></TaskButton>
            <SearchBox>
                <Icon name="search" />
                <input aria-label="Search" placeholder="Type here to search" />
            </SearchBox>
            <TaskButton aria-label="Cortana"><Icon name="cortana" /></TaskButton>
            <TaskButton aria-label="Task view"><Icon name="taskView" /></TaskButton>
            <TaskButton aria-label="Edge" $running><Icon name="edge" size={19} /></TaskButton>
            <TaskButton aria-label="File Explorer"><Icon name="explorer" size={20} /></TaskButton>
            <TaskButton aria-label="Chrome" $running $tone="#464646"><Icon name="chrome" size={21} /></TaskButton>
            <TaskButton aria-label="AutoCAD" $running $tone="#585858"><Icon name="acad" size={22} /></TaskButton>
            <Tray>
                <Icon name="up" size={12} /><Icon name="battery" size={15} /><Icon name="wifi" size={13} /><Icon name="volume" size={15} />
                <span>ENG</span>
                <Clock><span>02:26 AM</span><span>20-05-2020</span></Clock>
                <Icon name="note" />
            </Tray>
        </TaskRow>
    );
}

function App() {
    return (
        <Page>
            <GlobalStyle />
            <Header />
            <Ribbon />
            <FileTabs>
                <FileTab>Start</FileTab>
                <FileTab $active>TechYo Circuits Diagram*<Icon name="cross" size={9} /></FileTab>
                <AddTab aria-label="New drawing"><Icon name="plusBold" size={10} /></AddTab>
            </FileTabs>
            <Canvas>
                <Drawing />
                <ViewLabel>[−][Top][2D Wireframe]</ViewLabel>
                <DocButtons>
                    <button aria-label="Minimize drawing"><Icon name="docMin" size={11} /></button>
                    <button aria-label="Restore drawing"><Icon name="docRestore" size={11} /></button>
                    <button aria-label="Close drawing"><Icon name="cross" size={11} /></button>
                </DocButtons>
                <ViewCube />
                <NavTools />
                <CommandLine />
                <EdgeStrip />
            </Canvas>
            <StatusBar />
            <Taskbar />
        </Page>
    );
}

const GlobalStyle = createGlobalStyle`
    * {
        box-sizing: border-box;
    }

    body {
        margin: 0;
        background: #212830;
        font-family: "Noto Sans", "Open Sans", sans-serif;
        font-size: 11px;
        color: #e4e4e4;
    }

    button, input, select {
        margin: 0;
        padding: 0;
        border: 0;
        background: none;
        color: inherit;
        font: inherit;
        border-radius: 0;
    }

    svg {
        display: block;
        flex: none;
    }
`;

const Page = styled.div`
    min-height: 100vh;
    display: flex;
    flex-direction: column;
    overflow: hidden;
`;

const Caret = styled.i`
    flex: none;
    width: 0;
    border: ${({ $small }) => ($small ? 3 : 4)}px solid transparent;
    border-bottom-width: 0;
    border-top-color: ${({ $dark, $dim }) => ($dark ? '#303236' : $dim ? '#999' : '#f2f2f2')};
    transform: ${({ $up }) => ($up ? 'rotate(180deg)' : 'none')};
    pointer-events: none;
`;

const HeaderBar = styled.header`
    display: flex;
    background: #515151;
`;

const AppButton = styled.button`
    width: 38px;
    height: 38px;
    display: flex;
    align-items: center;
    padding-left: 2px;
    background: linear-gradient(#a5a5a5, #6e6e6e 60%, #8b8b8b);
    border: 1px solid #292929;
`;

const HeaderRows = styled.div`
    flex: 1;
    min-width: 0;
`;

const TitleBar = styled.div`
    display: flex;
    height: 23px;
    background: #fff;
`;

const Chrome = styled.div`
    display: flex;
    align-items: center;
    background: linear-gradient(#7a7a7a, #505050);
`;

const QuickAccess = styled(Chrome)`
    padding: 0 3px 0 5px;

    > i {
        margin: 0 2px;
    }
`;

const InfoCenter = styled(Chrome)`
    padding: 0 3px 0 5px;
`;

const QuickButton = styled.button`
    width: ${({ $tight }) => ($tight ? 20 : 22)}px;
    display: flex;
    justify-content: center;
    align-items: center;
`;

const DocTitle = styled.div`
    flex: 1;
    display: flex;
    justify-content: center;
    align-items: center;
    gap: 8px;
    color: #1c1c1c;
    white-space: nowrap;
`;

const Expand = styled.button`
    border: 4px solid transparent;
    border-left: 4px solid #eee;
    border-right: 0;
    margin-right: 5px;
`;

const KeywordInput = styled.input`
    width: 166px;
    height: 20px;
    padding: 0 4px;
    background: #717171;
    border: 1px solid #3c3c3c;
    font-style: italic;
    margin-right: 2px;

    &::placeholder {
        color: #c9c9c9;
        opacity: 1;
    }
`;

const UserButton = styled.button`
    display: flex;
    align-items: center;
    gap: 4px;
    padding-right: 7px;
`;

const HelpButton = styled.button`
    display: flex;
    align-items: center;
    gap: 8px;
    height: 100%;
    margin-left: 9px;
    padding-left: 7px;
    border-left: 1px solid #8a8a8a;
`;

const WindowButtons = styled.div`
    display: flex;
    padding: 0 2px 0 22px;

    button {
        width: 43px;
        display: flex;
        justify-content: center;
        align-items: center;
    }
`;

const RibbonTabs = styled.nav`
    display: flex;
    align-items: center;
    height: 19px;
    padding-left: 6px;
    border-top: 1px solid #3b3b3b;
`;

const RibbonTab = styled.button`
    height: 100%;
    padding: 0 8px;
    line-height: 18px;
    color: ${({ $active }) => ($active ? '#f5f5f5' : '#cfcfcf')};
    background: ${({ $active }) => ($active ? 'linear-gradient(#777, #5d5d5d)' : 'none')};
    box-shadow: ${({ $active }) => ($active ? '0 0 0 1px #333' : 'none')};
    clip-path: inset(-1px -1px 0 -1px);
    white-space: nowrap;

    &:first-child {
        margin-right: 2px;
    }
`;

const Pill = styled.button`
    display: flex;
    justify-content: center;
    align-items: center;
    width: 13px;
    height: 8px;
    margin: 0 5px 0 24px;
    border-radius: 3px;
    background: #f2f2f2;

    i {
        border: 3px solid transparent;
        border-top: 0;
        border-bottom: 3px solid #333;
    }
`;

const RibbonBar = styled.section`
    display: flex;
    height: 92px;
    padding: 0 0 1px 2px;
    background: linear-gradient(#515151, #3c3c3c);
    border-top: 1px solid #333;
`;

const PanelBox = styled.div`
    width: ${({ $width }) => $width}px;
    display: flex;
    flex-direction: column;
    background: #5b5b5b;
    border-right: 1px solid #404040;
    border-left: 1px solid #6c6c6c;
`;

const PanelBody = styled.div`
    flex: 1;
    display: flex;
    align-items: flex-start;
    padding-top: 4px;
`;

const PanelTitle = styled.div`
    position: relative;
    display: flex;
    justify-content: center;
    align-items: center;
    gap: 6px;
    height: 17px;
    background: #4b4b4b;
`;

const Launcher = styled.button`
    position: absolute;
    right: 3px;
    bottom: 4px;
`;

const Big = styled.button`
    flex: none;
    width: ${({ $width }) => $width}px;
    display: flex;
    flex-direction: column;
    align-items: center;
    padding-top: 1px;
    line-height: 14px;
    white-space: nowrap;

    span {
        margin: 3px 0;
    }
`;

const SmallGrid = styled.div`
    display: flex;
    flex-direction: column;
`;

const SmallRow = styled.div`
    display: flex;
    align-items: center;
    gap: ${({ $gap }) => $gap || 0}px;
    height: 22px;
    padding-left: 1px;
`;

const Split = styled.div`
    display: flex;
`;

const IconButton = styled.button`
    width: 22px;
    height: 20px;
    display: flex;
    justify-content: center;
    align-items: center;
    background: ${({ $active }) => ($active ? '#4d71ad' : 'none')};
    box-shadow: ${({ $active }) => ($active ? '0 0 0 1px #2f4b7c' : 'none')};
`;

const CaretButton = styled.button`
    width: 14px;
    height: 20px;
    display: flex;
    justify-content: center;
    align-items: center;
`;

const Fields = styled.div`
    flex: 1;
    min-width: 0;
    display: flex;
    flex-direction: column;
    gap: 2px;
    padding-right: 1px;
`;

const ComboBox = styled.label`
    display: flex;
    align-items: center;
    gap: 4px;
    height: 20px;
    padding: 0 3px 0 5px;
    background: linear-gradient(#5e5e5e, #4a4a4a);
    border: 1px solid #333;

    select {
        flex: 1;
        min-width: 0;
        appearance: none;
    }
`;

const Swatch = styled.i`
    width: 14px;
    height: 14px;
    margin: 0 2px 0 4px;
    background: #fff;
    border: 1px solid #ddd;
`;

const LineSample = styled.i`
    flex: none;
    width: 54px;
    height: 1px;
    background: #e4e4e4;
`;

const Collapsed = styled.button`
    width: 55px;
    margin-right: 2px;
    display: flex;
    flex-direction: column;
    align-items: center;
    padding: 5px 0;
    background: #616161;
    border: 1px solid #3c3c3c;

    span {
        flex: 1;
        padding-top: 2px;
    }
`;

const FileTabs = styled.nav`
    display: flex;
    align-items: flex-end;
    height: 28px;
    padding-left: 14px;
    background: #383838;
    border-top: 1px solid #8a8a8a;
    border-bottom: 4px solid #5b5b5b;
`;

const FileTab = styled.button`
    display: flex;
    align-items: center;
    gap: 6px;
    height: 20px;
    min-width: 124px;
    padding: 0 15px;
    color: ${({ $active }) => ($active ? '#f2f2f2' : '#b5b5b5')};
    background: ${({ $active }) => ($active ? 'linear-gradient(#808080, #5f5f5f)' : '#545454')};
    clip-path: polygon(0 100%, 3px 90%, 8px 15%, 12px 0, calc(100% - 12px) 0, calc(100% - 8px) 15%, calc(100% - 3px) 90%, 100% 100%);
    margin-right: ${({ $active }) => ($active ? 0 : -8)}px;

    svg {
        color: #444;
    }
`;

const AddTab = styled.button`
    width: 21px;
    height: 16px;
    margin-bottom: 2px;
    display: flex;
    justify-content: center;
    align-items: center;
    background: #555;
    border-radius: 2px 7px 2px 7px;
`;

const Canvas = styled.main`
    position: relative;
    flex: 1;
    min-height: 493px;
    overflow: hidden;
    background: #212830;
`;

const Sheet = styled.svg`
    position: absolute;
    top: 0;
    left: 0;
    font-family: "Liberation Sans", sans-serif;
`;

const ViewLabel = styled.div`
    position: absolute;
    top: 5px;
    left: 3px;
    line-height: 16px;
`;

const DocButtons = styled.div`
    position: absolute;
    top: 9px;
    right: 17px;
    display: flex;
    gap: 8px;
    color: #fff;
`;

const CubeBox = styled.div`
    position: absolute;
    top: 34px;
    right: 21px;
    display: flex;
    flex-direction: column;
    align-items: center;
    gap: 15px;
`;

const Compass = styled.svg`
    text-anchor: middle;
`;

const Wcs = styled.button`
    display: flex;
    align-items: center;
    gap: 5px;
    height: 16px;
    padding: 0 3px;
    color: #5a5c66;
    background: #9b9ca7;
    border: 1px solid #b2b3bc;
    border-radius: 4px;
`;

const NavBar = styled.div`
    position: absolute;
    top: 181px;
    right: 11px;
    width: 30px;
    height: 199px;
    display: flex;
    flex-direction: column;
    align-items: center;
    justify-content: space-between;
    padding: 2px 3px;
    background: #5b5f63;
    border-radius: 4px;
`;

const NavCorner = styled.button`
    align-self: flex-end;
`;

const EdgeStrip = styled.div`
    position: absolute;
    top: 0;
    bottom: 0;
    right: 1px;
    width: 8px;
    background: linear-gradient(#cfe0f2 85px, #a9cdee 85px);
    border: 1px solid #8aa4bd;
    border-width: 0 1px;
`;

const CommandArea = styled.div`
    position: absolute;
    bottom: 0;
    left: 291px;
    width: 697px;
`;

const History = styled.div`
    display: flex;
    flex-direction: column;
    align-items: flex-start;
    gap: 4px;
    padding: 0 0 2px 56px;
`;

const HistoryLine = styled.div`
    padding: 0 2px;
    font-family: "Liberation Mono", monospace;
    font-size: 11px;
    line-height: 15px;
    color: ${({ $faded }) => ($faded ? '#a3a6a9' : '#e0e2e4')};
    background: rgba(96, 100, 104, ${({ $faded }) => ($faded ? 0.6 : 0.8)});
    border-radius: 2px;
`;

const CommandBar = styled.div`
    display: flex;
    align-items: center;
    gap: 4px;
    height: 24px;
    padding-right: 4px;
    background: #b9babb;
    border-radius: 3px 0 0 0;
    overflow: hidden;
`;

const CommandTools = styled.div`
    width: 50px;
    height: 100%;
    display: flex;
    align-items: center;
    justify-content: space-between;
    padding: 0 3px 0 4px;
    background: linear-gradient(#6c6c6c, #474747);
    color: #ddd;
`;

const Grip = styled.i`
    width: 5px;
    height: 17px;
    background: repeating-linear-gradient(#999 0 1px, transparent 1px 3px);
`;

const CommandInput = styled.input`
    flex: 1;
    font-family: "Liberation Mono", monospace;
    font-size: 11px;
    font-style: italic;
    padding-left: 3px;
    color: #222;

    &::placeholder {
        color: #6b6b6b;
        opacity: 1;
    }
`;

const StatusRow = styled.footer`
    display: flex;
    justify-content: space-between;
    height: 27px;
    background: #3a3a3a;
    border-top: 1px solid #4a4a4a;
`;

const LayoutTabs = styled.div`
    display: flex;
    padding-left: 12px;
`;

const LayoutTab = styled.button`
    height: 16px;
    padding: 0 ${({ $add }) => ($add ? 6 : 10)}px;
    line-height: 15px;
    font-weight: ${({ $active }) => ($active ? 700 : 400)};
    color: ${({ $active }) => ($active ? '#fff' : '#adadad')};
    background: ${({ $active }) => ($active ? 'linear-gradient(#555, #8a8a8a)' : '#555')};
    clip-path: polygon(0 0, 100% 0, calc(100% - 3px) 60%, calc(100% - 8px) 100%, 8px 100%, 3px 60%);
`;

const StatusTools = styled.div`
    display: flex;
    gap: 1px;
    padding-bottom: 1px;
`;

const StatusGroup = styled.div`
    width: ${({ $width }) => $width}px;
    display: flex;
    align-items: center;
    justify-content: space-evenly;
    background: #4d4d4d;
    border: 1px solid #767676;
    color: #f2f2f2;
    font-weight: 500;
`;

const TaskRow = styled.footer`
    display: flex;
    height: 38px;
    background: #29292a;
`;

const TaskButton = styled.button`
    width: 45px;
    margin-right: 1px;
    display: flex;
    justify-content: center;
    align-items: center;
    background: ${({ $tone }) => $tone || 'none'};
    border-bottom: 2px solid ${({ $running }) => ($running ? '#76b0e2' : 'transparent')};

    &:first-child {
        margin-right: 0;
    }
`;

const SearchBox = styled.label`
    display: flex;
    align-items: center;
    gap: 11px;
    width: 322px;
    margin-bottom: 1px;
    padding: 0 11px;
    background: #f2f2f2;

    input {
        flex: 1;
        min-width: 0;
        font-size: 13px;
        color: #222;
    }

    input::placeholder {
        color: #3a3a3a;
        opacity: 1;
    }
`;

const Tray = styled.div`
    margin-left: auto;
    display: flex;
    align-items: center;
    gap: 9px;
    padding-right: 23px;
    color: #f2f2f2;
`;

const Clock = styled.div`
    display: flex;
    flex-direction: column;
    align-items: center;
    margin: 0 6px 0 2px;
    line-height: 17px;
`;

export default App;
